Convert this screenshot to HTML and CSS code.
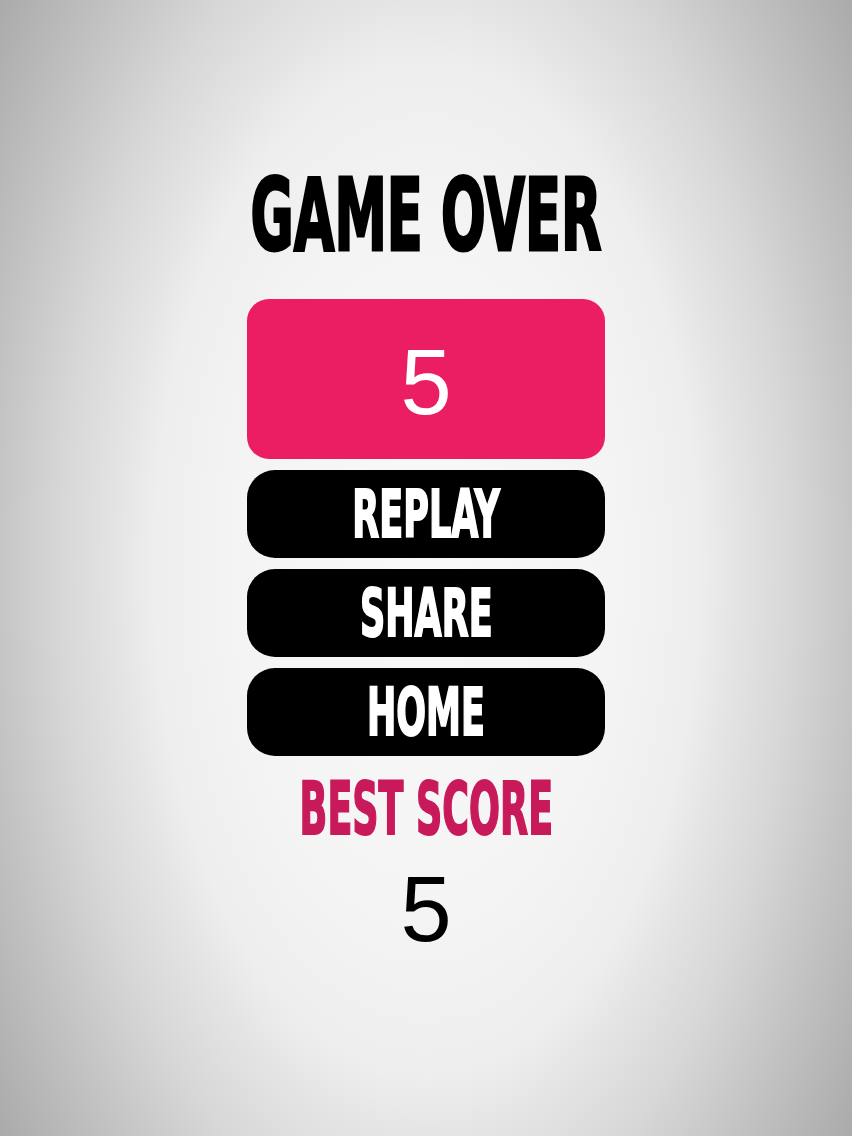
FILE: index.html
```html
<!DOCTYPE html>
<html lang="en">

<head>
    <meta charset="UTF-8">
    <meta name="viewport" content="width=device-width, initial-scale=1.0">
    <title>Game Over</title>
    <link rel="stylesheet" href="styles.css">
</head>

<body>
    <div class="screen">
        <h1 class="title"><span class="squeeze">GAME OVER</span></h1>
        <div class="score-box">5</div>
        <div class="menu">
            <button class="btn"><span class="squeeze">REPLAY</span></button>
            <button class="btn"><span class="squeeze">SHARE</span></button>
            <button class="btn"><span class="squeeze">HOME</span></button>
        </div>
        <div class="best-label"><span class="squeeze tight">BEST SCORE</span></div>
        <div class="best-value">5</div>
    </div>
</body>

</html>
```

FILE: styles.css
```css
* {
    margin: 0;
    padding: 0;
    box-sizing: border-box;
}

body {
    font-family: "Liberation Sans", Arial, sans-serif;
    background: radial-gradient(ellipse 620px 1150px at 50% 50%, #f9f9fa 0%, #f4f4f5 30%, #eeeeef 44%, #e4e4e5 50%, #d7d7d8 59%, #c5c5c6 69%, #a8a8a9 86%, #a0a0a1 100%);
    min-height: 1136px;
}

.screen {
    display: flex;
    flex-direction: column;
    align-items: center;
    padding-top: 164px;
}

/* condensed headings: narrow bold squeezed, stroke keeps them heavy */
.squeeze {
    display: inline-block;
    font-family: "Liberation Sans Narrow", "DejaVu Sans Condensed", sans-serif;
    font-weight: bold;
    transform: scaleX(0.59);
    white-space: nowrap;
    -webkit-text-stroke: 2px currentColor;
}

.squeeze.tight {
    transform: scaleX(0.555);
}

.title {
    font-size: 100px;
    line-height: 103px;
    height: 103px;
    color: #000;
    text-align: center;
}

.title .squeeze {
    transform: scaleX(0.585);
    -webkit-text-stroke: 3px currentColor;
}

.score-box {
    width: 358px;
    height: 160px;
    margin-top: 32px;
    border-radius: 22px;
    background-color: #ec1e63;
    color: #fff;
    font-size: 92px;
    line-height: 1;
    display: flex;
    align-items: center;
    justify-content: center;
    padding-top: 6px;
}

.menu {
    display: flex;
    flex-direction: column;
    gap: 11px;
    margin-top: 11px;
}

.btn {
    width: 358px;
    height: 88px;
    border: none;
    border-radius: 28px;
    background-color: #000;
    color: #fff;
    font-size: 66px;
    line-height: 1;
    display: flex;
    align-items: center;
    justify-content: center;
    padding-top: 2px;
}

.best-label {
    margin-top: 16px;
    font-size: 73px;
    line-height: 1;
    color: #c81a5b;
}

.best-value {
    margin-top: 18px;
    font-size: 92px;
    line-height: 1;
    color: #000;
}
```
